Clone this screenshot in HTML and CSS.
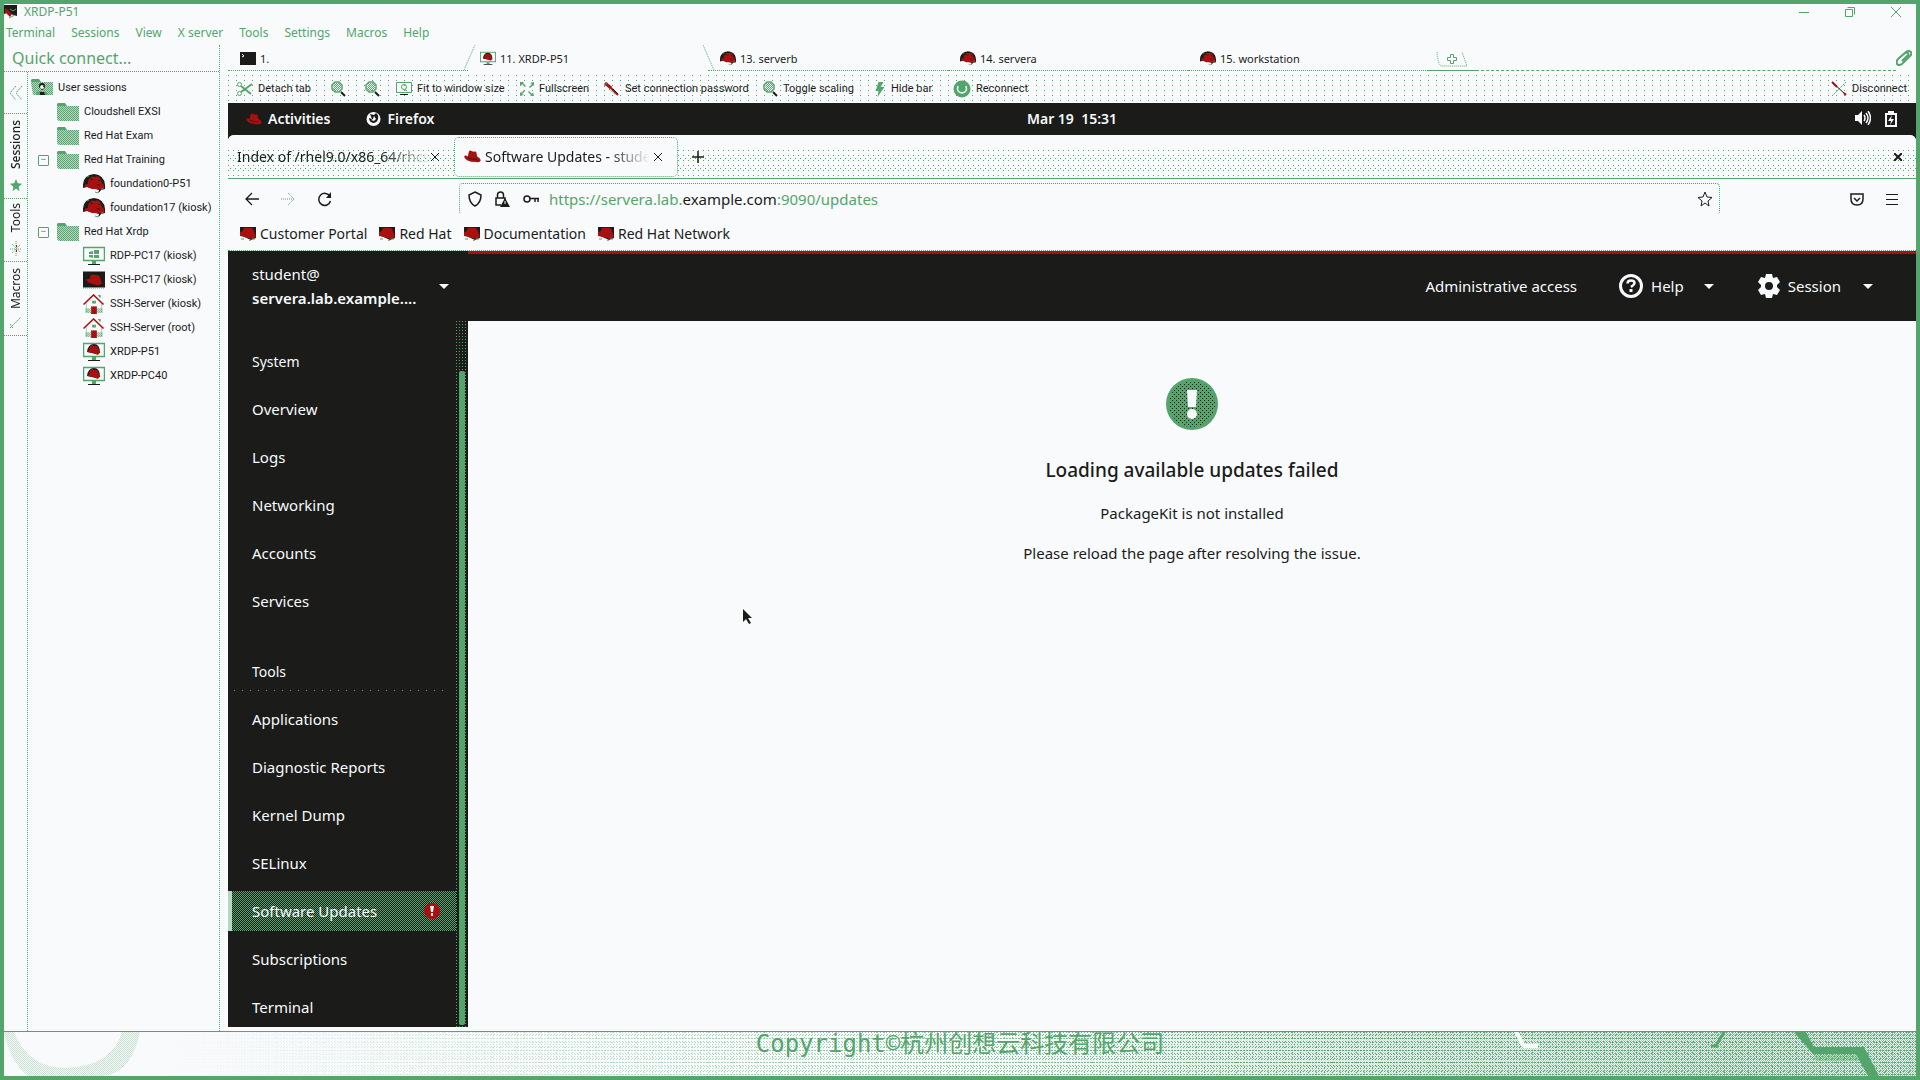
FILE: index.html
```
<!DOCTYPE html>
<html lang="en">
<head>
<meta charset="utf-8">
<title>XRDP-P51</title>
<link rel="stylesheet" href="styles.css">
</head>
<body>
<svg class="sprite" aria-hidden="true">
  <defs>
    <pattern id="weave" width="2" height="2" patternUnits="userSpaceOnUse"><path class="g" d="M0 0h1v1H0zM1 1h1v1H1z"/></pattern>
    <pattern id="speck" width="4" height="4" patternUnits="userSpaceOnUse"><path class="g" d="M0 0h4v4H0z"/><path class="k" d="M0 0h1v1H0zM2 2h1v1H2z"/></pattern>
  </defs>
  <symbol id="fedora" viewBox="0 0 18 14"><path class="r" d="M4 7 5 2Q6 0 8 1l2 1q2-1 3 0l1 5q3 1 4 4-1 3-5 2Q7 13 3 11 0 9 0 7q1-2 4 0z"/><path class="ks" d="M4 8q4 3 10 2"/></symbol>
  <symbol id="hatball" viewBox="0 0 22 20"><path class="k" d="M0 14Q-1 1 11 0q12 1 11 15l-4 1q-1 2-3 3l1-3-12-3z"/><path class="r" d="M1 12q1-2 4-2 0-6 3-7 2-1 4 0 3-2 5 1l2 5q3 2 2 5-2 2-6 1l-6 0-5-2-3-1z"/><path class="gs" d="M4 3l2-1M12 18l3 1M18 15h3"/><path class="ks" d="M7 4l3 2M15 6l2 1M14 11l3 0"/></symbol>
  <symbol id="hatbox" viewBox="0 0 16 14"><path class="k" d="M0 0h16v11l-5 2L0 8z"/><path class="r" d="M0 9V5l3-1q0-4 5-3 3-1 5 1l2 5 1 3-4 2-7-2z"/><path class="gs" d="M1 12h3M12 12h3M9 13l2 1"/></symbol>
  <symbol id="folder" viewBox="0 0 22 18"><path class="tint" d="M0 3h22v15H2l-2-2z"/><path d="M0 3h22v15H2l-2-2z" fill="url(#weave)"/><path class="g" d="M0 1l1-1h7l2 3H0z"/></symbol>
  <symbol id="userfolder" viewBox="0 0 22 18"><path class="tint" d="M0 3h22v13H2z"/><path d="M0 3h22v13H2z" fill="url(#weave)"/><path class="g" d="M0 1l1-1h7l2 3H0z"/><circle cx="11" cy="7" r="3" class="k"/><circle cx="11" cy="8" r="2" class="w"/><path class="r" d="M9 6h1v1H9zM12 7h1v1h-1zM10 10h2v1h-2z"/><path class="g" d="M5 16q1-4 4-4l2 2 1-2q4 1 5 4z"/><path class="k" d="M9 13h4l1 3H9z"/></symbol>
  <symbol id="monitor" viewBox="0 0 22 20"><path class="gs" d="M.5 1.500h21v13H.5z" stroke-width="1.500"/><path class="g" d="M9 15h4v3H9z"/><path class="k" d="M5 18h12v1H5z"/></symbol>
  <symbol id="rdp" viewBox="0 0 22 20"><use href="#monitor"/><path class="g" d="M6 6l4-1v3H6zM11 4h5v4h-5zM6 9h4v3l-4-1zM11 9h5v3h-5z"/></symbol>
  <symbol id="xrdp" viewBox="0 0 22 20"><use href="#monitor"/><path class="k" d="M4 10q1-8 7-8 6 0 6 9l-4 1z"/><path class="r" d="M5 10l2-5q2-3 4-1 3-1 4 2l2 4-2 3-5-2z"/></symbol>
  <symbol id="sshhat" viewBox="0 0 22 17"><path class="k" d="M0 0h22v16H0z"/><path class="r" d="M3 8l4-1 1-4 8 1 2 5 1 3-4 2-7-2q-3 0-5-4z"/><path class="gs" d="M0 16.500h22" stroke-dasharray="1 1"/></symbol>
  <symbol id="house" viewBox="0 0 22 21"><path class="gs" d="M3 10v10M19 10v10" stroke-dasharray="1 1"/><path d="M2 15h6v5H2zM14 15h6v5h-6z" fill="url(#weave)"/><path class="rs" d="M0 11 10.500 1 21 11" stroke-width="1.600"/><path class="g" d="M9 7h4v3H9zM15 1h3v3h-1z"/><path class="r" d="M8 13h6v8H8z"/></symbol>
  <symbol id="magnify" viewBox="0 0 16 16"><path class="gs" d="M5 1h4l3 3v4l-3 3H5L2 8V4z" stroke-width="1.500"/><path d="M4 2h5l2 2v4l-2 2H5L3 8z" fill="url(#weave)"/><path class="ks" d="M11 11l4 4" stroke-width="2"/></symbol>
  <symbol id="scissors" viewBox="0 0 16 14"><circle cx="2.500" cy="2.500" r="2" class="gs"/><circle cx="2.500" cy="11.500" r="2" class="gs"/><path class="gs" d="M4 4l10 8M4 10l11-8" stroke-width="2"/></symbol>
  <symbol id="fit" viewBox="0 0 16 14"><path class="gs" d="M.5.5h15v10H.5z"/><circle cx="8" cy="5" r="2.500" class="gs"/><path class="k" d="M9 7l2 2h-1zM4 12h8v1H4z"/></symbol>
  <symbol id="full" viewBox="0 0 14 14"><path class="g" d="M0 0h4L3 1l3 3-1 1-3-3-1 2H0zM14 0v4l-1-1-3 3-1-1 3-3-2-1zM0 14v-4l1 1 3-3 1 1-3 3 2 1zM14 14h-4l1-1-3-3 1-1 3 3 1-2z"/></symbol>
  <symbol id="wrench" viewBox="0 0 16 14"><path class="rs" d="M1 1l6 5" stroke-width="3"/><path class="rs" d="M6 5l8 8" stroke-width="2"/><path class="gs" d="M0 5l4-5M5 7l7 6" stroke-dasharray="2 1"/><path class="ks" d="M9 7l5 5"/></symbol>
  <symbol id="bolt" viewBox="0 0 9 15"><path class="g" d="M3 0h5L5 5h4L2 15l1-6H0z"/></symbol>
  <symbol id="power" viewBox="0 0 18 18"><circle cx="9" cy="9" r="8.500" class="g"/><path class="ws" d="M5 6q-2 6 4 7 6-1 4-7" stroke-width="1.500"/></symbol>
  <symbol id="unplug" viewBox="0 0 16 16"><path class="gs" d="M1 15 15 1" stroke-dasharray="2 1"/><path class="ks" d="M1 1l14 13"/><path class="rs" d="M1 1l5 5M13 12l2 2" stroke-width="2"/></symbol>
  <symbol id="terminal" viewBox="0 0 16 13"><path class="k" d="M0 0h16v13H0z"/><path class="ws" d="M2 2l2 2-2 1"/></symbol>
  <symbol id="star" viewBox="0 0 16 16"><path d="M8 1l2 5 5 .5-4 3.500 1 5-4-3-4 3 1-5L1 6.500 6 6z"/></symbol>
  <symbol id="gear" viewBox="0 0 22 24"><path class="w" fill-rule="evenodd" d="M8 0h6l1 4 4-1 3 5-3 3v2l3 3-3 5-4-1-1 4H8l-1-4-4 1-3-5 3-3v-2L0 8l3-5 4 1zM11 8a4 4 0 100 8 4 4 0 000-8z"/></symbol>
</svg>

<div class="window">
  <header class="titlebar">
    <svg class="app-icon" viewBox="0 0 13 14"><path class="k" d="M0 0h13v11L3 8 0 9z"/><path class="r" d="M1 3l3 2 4 4-2 3-5-5z"/><path class="gs" d="M6 4l3 2 3-2M5 13l6-3"/></svg>
    <span class="title">XRDP-P51</span>
    <button class="win" aria-label="Minimize"><svg width="10" height="10"><path class="gs" d="M0 5.500h10"/></svg></button>
    <button class="win" aria-label="Restore"><svg width="10" height="10"><path class="gs" d="M.5 2.500h7v7h-7zM2.500.5h7v7"/></svg></button>
    <button class="win" aria-label="Close"><svg width="10" height="10"><path class="gs" d="M0 0l10 10M10 0 0 10"/></svg></button>
  </header>
  <nav class="menubar">
    <button>Terminal</button><button>Sessions</button><button>View</button><button>X server</button><button>Tools</button><button>Settings</button><button>Macros</button><button>Help</button>
  </nav>

  <div class="workspace">
    <aside class="left">
      <input class="quick" type="text" placeholder="Quick connect..." aria-label="Quick connect">
      <div class="left-body">
        <div class="strip">
          <button class="strip-item fold" aria-label="Collapse"><svg width="14" height="14"><path class="gs" d="M7 0 1 7l6 7M13 0 7 7l6 7" stroke-dasharray="2 1"/></svg></button>
          <button class="strip-item sess"><span class="up">Sessions</span><svg class="g" width="14" height="14"><use href="#star"/></svg></button>
          <button class="strip-item tool"><span class="up">Tools</span><svg width="12" height="16"><path class="gs" d="M6 0v16M2 3l8 8M10 4l-8 8M0 8h12" stroke-dasharray="1 1"/><path class="r" d="M6 4h1v2H6zM6 9h1v2H6z"/></svg></button>
          <button class="strip-item macro"><span class="up">Macros</span><svg width="12" height="12"><path class="gs" d="M0 11 11 0M0 7l3 4" stroke-dasharray="2 1"/></svg></button>
        </div>
        <ul class="tree">
          <li class="l0"><svg class="ti"><use href="#userfolder"/></svg>User sessions</li>
          <li class="l1"><svg class="ti"><use href="#folder"/></svg>Cloudshell EXSI</li>
          <li class="l1"><svg class="ti"><use href="#folder"/></svg>Red Hat Exam</li>
          <li class="l1 open"><svg class="ti"><use href="#folder"/></svg>Red Hat Training</li>
          <li class="l2"><svg class="ti"><use href="#hatball"/></svg>foundation0-P51</li>
          <li class="l2"><svg class="ti"><use href="#hatball"/></svg>foundation17 (kiosk)</li>
          <li class="l1 open"><svg class="ti"><use href="#folder"/></svg>Red Hat Xrdp</li>
          <li class="l2"><svg class="ti"><use href="#rdp"/></svg>RDP-PC17 (kiosk)</li>
          <li class="l2"><svg class="ti"><use href="#sshhat"/></svg>SSH-PC17 (kiosk)</li>
          <li class="l2"><svg class="ti"><use href="#house"/></svg>SSH-Server (kiosk)</li>
          <li class="l2"><svg class="ti"><use href="#house"/></svg>SSH-Server (root)</li>
          <li class="l2"><svg class="ti"><use href="#xrdp"/></svg>XRDP-P51</li>
          <li class="l2"><svg class="ti"><use href="#xrdp"/></svg>XRDP-PC40</li>
        </ul>
      </div>
    </aside>

    <main class="main">
      <div class="tabs">
        <button class="tab"><svg width="16" height="13"><use href="#terminal"/></svg>1.</button>
        <button class="tab current"><svg width="16" height="15"><use href="#xrdp"/></svg>11. XRDP-P51<svg class="slant start" width="12" height="26"><path class="gs" d="M0 25 11 0" stroke-dasharray="1 1"/></svg><svg class="slant end" width="12" height="26"><path class="gs" d="M0 0 11 25" stroke-dasharray="1 1"/></svg></button>
        <button class="tab"><svg width="16" height="15"><use href="#hatball"/></svg>13. serverb</button>
        <button class="tab"><svg width="16" height="15"><use href="#hatball"/></svg>14. servera</button>
        <button class="tab"><svg width="16" height="15"><use href="#hatball"/></svg>15. workstation</button>
        <button class="tab-new" aria-label="New tab"><svg width="32" height="15"><path class="gs" d="M1 0q1 14 5 14h25L26 0" stroke-dasharray="1 1"/><path class="gs" d="M14.500 2.500h3v3h3v3h-3v3h-3v-3h-3v-3h3z"/></svg></button>
        <span class="tabs-rest"></span>
        <button class="clip" aria-label="Attach"><svg width="16" height="16"><path class="gs" d="M3 8l7-6q3-2 5 0 1 2-1 4l-8 8q-3 2-5 0-1-3 1-5l7-6q2-1 3 0 1 2-1 3l-5 5" stroke-width="2"/></svg></button>
      </div>

      <div class="tools">
        <button class="t1"><svg width="16" height="14"><use href="#scissors"/></svg>Detach tab</button>
        <button class="t2" aria-label="Zoom in"><svg width="16" height="16"><use href="#magnify"/></svg></button>
        <button class="t3" aria-label="Zoom out"><svg width="16" height="16"><use href="#magnify"/></svg></button>
        <button class="t4"><svg width="16" height="14"><use href="#fit"/></svg>Fit to window size</button>
        <button class="t5"><svg width="14" height="14"><use href="#full"/></svg>Fullscreen</button>
        <button class="t6"><svg width="16" height="14"><use href="#wrench"/></svg>Set connection password</button>
        <button class="t7"><svg width="16" height="16"><use href="#magnify"/></svg>Toggle scaling</button>
        <button class="t8"><svg width="12" height="15"><use href="#bolt"/></svg>Hide bar</button>
        <button class="t9"><svg width="18" height="18"><use href="#power"/></svg>Reconnect</button>
        <button class="t10"><svg width="16" height="16"><use href="#unplug"/></svg>Disconnect</button>
      </div>

      <div class="gnome">
        <div class="gnome-left">
          <button class="activities"><svg width="16" height="12"><use href="#fedora"/></svg>Activities</button>
          <button><svg width="15" height="14" viewBox="0 0 15 14"><circle cx="7.500" cy="7" r="7" class="w"/><path class="k" d="M4 2l4 1 2-2q3 2 2 6-1 4-5 4-4-1-4-5l3 1z"/><path class="w" d="M8 4l2 3-2 2-3-1 2-1z"/></svg>Firefox</button>
        </div>
        <time>Mar 19&nbsp; 15:31</time>
        <div class="gnome-right">
          <svg width="16" height="14"><path class="w" d="M0 4h3l4-4v14l-4-4H0z"/><path class="ws" d="M9 4q2 3 0 6M11 2q4 5 0 10M13 0q5 7 0 14" stroke-width="1.500"/></svg>
          <svg width="12" height="16"><path class="w" fill-rule="evenodd" d="M0 2h3V0h6v2h3v14H0zM2 4v10h8V4z"/><path class="w" d="M7 4 3 10h3l-1 4 4-6H6z"/></svg>
        </div>
      </div>

      <div class="browser-tabs">
        <button class="btab first"><span class="fade">Index of /rhel9.0/x86_64/rhcs</span><svg width="8" height="8"><path class="ks" d="M0 0l8 8M8 0 0 8"/></svg></button>
        <button class="btab on"><svg width="17" height="13"><use href="#fedora"/></svg><span class="fade">Software Updates - stude</span><svg width="8" height="8"><path class="ks" d="M0 0l8 8M8 0 0 8"/></svg></button>
        <button class="plus" aria-label="Open a new tab"><svg width="12" height="12"><path class="ks" d="M6 0v12M0 6h12" stroke-width="1.500"/></svg></button>
        <button class="bclose" aria-label="Close window"><svg width="8" height="8"><path class="ks" d="M0 0l8 8M8 0 0 8" stroke-width="2"/></svg></button>
      </div>

      <div class="nav">
        <div class="nav-btns">
          <button aria-label="Back"><svg width="14" height="14"><path class="ks" d="M7 1 1 7l6 6M1 7h13" stroke-width="1.300"/></svg></button>
          <button aria-label="Forward"><svg width="14" height="14"><path class="gs" d="M7 1l6 6-6 6M0 7h13" stroke-dasharray="1 1"/></svg></button>
          <button aria-label="Reload"><svg width="15" height="15"><path class="ks" d="M13 4.500A6 6 0 1 0 13.500 9" stroke-width="1.500"/><path class="k" d="M14 0v6H9z"/></svg></button>
        </div>
        <div class="url">
          <svg width="14" height="16"><path class="ks" d="M7 1l6 3q0 8-6 11-6-3-6-11z" stroke-width="1.500"/></svg>
          <svg width="15" height="16"><path class="ks" d="M2.500 7V4q0-3 3-3t3 3v3M6 14H1V7h9v2" stroke-width="1.500"/><path class="k" d="M10 7l5 9H5z"/><path class="w" d="M9.500 10h1v3h-1z"/></svg>
          <svg width="16" height="10"><circle cx="4" cy="5" r="3" class="ks" stroke-width="1.500"/><path class="ks" d="M7 4.500h9M12 5v3M15 5v3" stroke-width="1.500"/></svg>
          <span class="address" role="textbox" aria-label="Address">https://servera.lab.<b>example.com</b>:9090/updates</span>
          <button aria-label="Bookmark"><svg width="16" height="16" class="hollow"><use href="#star"/></svg></button>
        </div>
        <div class="nav-end">
          <button aria-label="Pocket"><svg width="14" height="13"><path class="ks" d="M1 1h12v5q0 6-6 6T1 6zM4 5l3 3 3-3" stroke-width="1.500"/></svg></button>
          <button aria-label="Menu"><svg width="12" height="11"><path class="k" d="M0 0h12v1H0zM0 5h12v1H0zM0 10h12v1H0z"/></svg></button>
        </div>
      </div>

      <div class="bookmarks">
        <a href="#"><svg width="16" height="14"><use href="#hatbox"/></svg>Customer Portal</a>
        <a href="#"><svg width="16" height="14"><use href="#hatbox"/></svg>Red Hat</a>
        <a href="#"><svg width="16" height="14"><use href="#hatbox"/></svg>Documentation</a>
        <a href="#"><svg width="16" height="14"><use href="#hatbox"/></svg>Red Hat Network</a>
      </div>

      <div class="masthead">
        <button class="host"><span class="who"><span>student@</span><b>servera.lab.example....</b></span><i class="caret"></i></button>
        <div class="mast-right">
          <button class="admin">Administrative access</button>
          <button class="help"><svg width="24" height="24"><circle cx="12" cy="12" r="10.500" class="ws" stroke-width="3"/><path class="ws" d="M8.500 9.500q0-3 3.500-3t3.500 2.500q0 1.500-3.500 4" stroke-width="2.500"/><path class="w" d="M10.500 15h3v3h-3z"/></svg>Help<i class="caret"></i></button>
          <button class="session"><svg width="22" height="24"><use href="#gear"/></svg>Session<i class="caret"></i></button>
        </div>
      </div>

      <div class="page">
        <nav class="sidebar">
          <div class="side-scroll">
            <h2>System</h2>
            <a href="#">Overview</a><a href="#">Logs</a><a href="#">Networking</a><a href="#">Accounts</a><a href="#">Services</a>
            <h2 class="ruled">Tools</h2>
            <a href="#">Applications</a><a href="#">Diagnostic Reports</a><a href="#">Kernel Dump</a><a href="#">SELinux</a>
            <a href="#" class="active">Software Updates<svg width="16" height="16"><circle cx="8" cy="8" r="8" class="r"/><path class="w" d="M6 3h4l-1 6H7zM7 10h2v3H7z"/></svg></a>
            <a href="#">Subscriptions</a><a href="#">Terminal</a>
          </div>
          <div class="bar"><div class="thumb"></div></div>
        </nav>
        <section class="content">
          <svg class="alert" width="52" height="52" viewBox="0 0 52 52"><circle cx="26" cy="26" r="26" class="g"/><circle cx="26" cy="26" r="23" fill="url(#speck)"/><path class="w" d="M21 12h10l-1 17h-8z"/><circle cx="26" cy="36" r="5" class="w"/></svg>
          <h1>Loading available updates failed</h1>
          <p>PackageKit is not installed</p>
          <p>Please reload the page after resolving the issue.</p>
        </section>
      </div>
    </main>
  </div>

  <footer class="footer">
    <svg class="arc" width="140" height="44"><path d="M0 0h10q14 36 52 36Q108 34 118 0h18q-8 40-36 44H24Q6 30 0 0z"/></svg>
    <p>Copyright©杭州创想云科技有限公司</p>
    <svg class="hex" width="420" height="44"><path class="ws" d="M56 0l8 14h14" stroke-width="4"/><path class="gs" d="M264 0l-8 14h-5" stroke-width="3"/><path class="g" d="M334 0h12l8 15h50l15 29h-11l-12-22h-43z"/><path class="tint" d="M354 22h42l4 7h-44z"/></svg>
  </footer>
  <svg class="pointer" width="11" height="17"><path class="k" d="M0 0v13l3-3 3 5 2-1-3-5h4z"/></svg>
</div>
</body>
</html>
```
FILE: styles.css
```
:root {
  --paper: #f8fafc;
  --green: #54a56b;
  --ink: #1b1c1a;
  --red: #ab1010;
  --dot: conic-gradient(from 270deg at 1px 1px, var(--green) 90deg, transparent 0);
  --check: repeating-conic-gradient(var(--green) 0 25%, transparent 0 50%);
}
* { box-sizing: border-box; }
body { margin: 0; background: var(--paper); color: var(--ink); font: 16px/24px "Noto Sans", sans-serif; }
button, input { font: inherit; color: inherit; border: 0; padding: 0; margin: 0; background: none; }
button { display: flex; align-items: center; white-space: nowrap; }
a { color: inherit; text-decoration: none; }
h1, h2, p, ul { margin: 0; padding: 0; font-weight: 400; }
svg { flex: none; display: block; }
.sprite { position: absolute; width: 0; height: 0; }
.g { fill: var(--green); } .k { fill: var(--ink); } .r { fill: var(--red); } .w { fill: var(--paper); }
.tint { fill: var(--green); fill-opacity: .4; }
.gs, .ks, .rs, .ws { fill: none; }
.gs { stroke: var(--green); } .ks { stroke: var(--ink); } .rs { stroke: var(--red); } .ws { stroke: var(--paper); }
.hollow { fill: none; stroke: var(--ink); }

.window { position: relative; height: 100vh; border: 4px solid var(--green); display: flex; flex-direction: column; overflow: hidden; }

.titlebar { display: flex; align-items: center; height: 16px; flex: none; color: var(--green); font-size: 12px; line-height: 16px; padding-right: 15px; gap: 36px; }
.app-icon { width: 13px; height: 14px; margin-right: -29px; }
.title { flex: 1; }
.win { height: 12px; }
.menubar { display: flex; gap: 16px; height: 25px; flex: none; padding-left: 2px; color: var(--green); font-size: 12px; line-height: 16px; }

.workspace { flex: 1; min-height: 0; display: flex; gap: 8px; }
.left { width: 216px; flex: none; display: flex; flex-direction: column; border-right: 1px dotted var(--green); }
.quick { height: 27px; flex: none; padding: 0 8px; width: 100%; font-size: 16px; border-bottom: 1px dotted var(--green); }
.quick::placeholder { color: var(--green); opacity: 1; }
.left-body { flex: 1; display: flex; }
.strip { width: 24px; flex: none; border-right: 1px dotted var(--green); font-size: 12px; line-height: 16px; }
.strip-item { flex-direction: column; justify-content: center; gap: 8px; width: 23px; border-bottom: 1px dotted var(--green); }
.up { writing-mode: vertical-rl; transform: rotate(180deg); }
.fold { height: 42px; } .sess { height: 85px; } .tool { height: 63px; } .macro { height: 74px; }
.sess { font-weight: 500; }
.tree { list-style: none; padding-top: 4px; font: 11px/24px Roboto, sans-serif; white-space: nowrap; }
.tree li { display: flex; align-items: center; gap: 5px; height: 24px; position: relative; }
.ti { width: 22px; height: 20px; }
.l0 { padding-left: 3px; } .l1 { padding-left: 29px; } .l2 { padding-left: 55px; }
.open::before { content: "−"; position: absolute; left: 10px; width: 9px; height: 9px; border: 1px solid var(--green); color: var(--green); line-height: 7px; text-align: center; border-radius: 1px; }

.main { flex: 1; min-width: 0; display: flex; flex-direction: column; }
.tabs { display: flex; height: 26px; flex: none; font-size: 11px; }
.tab { width: 240px; flex: none; gap: 4px; padding: 2px 0 0 12px; position: relative; border-bottom: 1px dotted var(--green); }
.tab.current { border-bottom-color: transparent; }
.slant { position: absolute; top: 0; }
.start { left: -4px; } .end { right: -7px; }
.tab-new { width: 48px; padding-top: 3px; justify-content: center; border-bottom: 1px solid var(--green); }
.tabs-rest { flex: 1; border-bottom: 1px dashed var(--green); }
.clip { width: 20px; }

.tools { display: flex; height: 32px; flex: none; padding: 4px 9px 0; font: 11px/24px Roboto, sans-serif; background: var(--dot) 0 4px / 8px 5px; }
.tools button { gap: 5px; flex: none; height: 28px; }
.t1 { width: 93px; } .t2 { width: 34px; } .t3 { width: 32px; } .t4 { width: 124px; } .t5 { width: 84px; }
.t6 { width: 158px; } .t7 { width: 112px; } .t8 { width: 79px; }
.tools .t10 { margin-left: auto; }

.gnome { display: grid; grid-template-columns: 1fr auto 1fr; align-items: center; height: 32px; flex: none; background: var(--ink); color: var(--paper); font-size: 14px; font-weight: 600; }
.gnome-left { display: flex; gap: 36px; padding-left: 18px; }
.gnome-left button { gap: 6px; }
.gnome-right { display: flex; justify-content: flex-end; gap: 14px; padding-right: 19px; }

.browser-tabs { display: flex; align-items: center; height: 44px; flex: none; padding-left: 9px; border-bottom: 1px solid var(--green); font-size: 14px; background: linear-gradient(var(--paper) 14px, transparent 0), var(--dot) 0 0 / 5px 5px, var(--dot) 2px 3px / 5px 10px, var(--paper); border-radius: 6px 6px 0 0; box-shadow: 0 -8px 0 var(--ink); }
.btab { height: 40px; }
.first { width: 217px; }
.fade { flex: 1; min-width: 0; text-align: left; mask-image: linear-gradient(90deg, #000 75%, transparent); }
.first .fade { flex: none; width: 194px; }
.on { width: 224px; padding: 0 15px 0 9px; gap: 4px; background: var(--paper); border: 1px dotted var(--green); border-radius: 5px; }
.plus { margin-left: 14px; }
.bclose { margin-left: auto; padding-right: 14px; }

.nav { display: flex; align-items: center; height: 40px; flex: none; }
.nav-btns { display: flex; gap: 22px; width: 231px; flex: none; padding-left: 17px; }
.url { flex: 1; display: flex; align-items: center; height: 32px; gap: 13px; padding: 0 6px 0 8px; border: 1px dotted var(--green); border-bottom-color: transparent; border-radius: 4px; }
.address { flex: 1; color: var(--green); font-size: 15px; margin-left: -3px; }
.address b { color: var(--ink); font-weight: 400; }
.nav-end { display: flex; width: 196px; flex: none; justify-content: flex-end; gap: 22px; padding-right: 18px; }

.bookmarks { display: flex; align-items: center; gap: 12px; height: 32px; flex: none; padding: 0 0 1px 12px; border-bottom: 1px dotted var(--green); font-size: 14px; }
.bookmarks a { display: flex; align-items: center; gap: 4px; }

.masthead { display: flex; height: 70px; flex: none; background: var(--ink); color: var(--paper); font-size: 15px; }
.host { width: 240px; flex: none; justify-content: space-between; padding: 0 19px 0 24px; text-align: left; }
.who { display: flex; flex-direction: column; }
.who b { font-weight: 600; }
.mast-right { flex: 1; display: flex; justify-content: flex-end; border-top: 3px solid var(--red); padding: 0 43px 3px 0; }
.caret { border: 5px solid transparent; border-top-color: var(--paper); border-bottom: 0; }
.admin { margin-right: 42px; }
.help, .session { gap: 8px; }
.help { margin-right: 44px; }
.help .caret { margin-left: 12px; }
.session .caret { margin-left: 14px; }

.page { flex: 1; min-height: 0; display: flex; margin-bottom: 4px; }
.sidebar { width: 240px; flex: none; display: flex; background: var(--ink); color: var(--paper); font-size: 15px; }
.side-scroll { flex: 1; overflow: hidden; padding-top: 29px; }
.side-scroll h2 { height: 31px; margin: 0 6px 8px; padding-left: 18px; font-size: 14px; line-height: 24px; }
.side-scroll .ruled { margin-top: 39px; background: var(--dot) 0 30px / 8px 40px; }
.side-scroll a { display: flex; align-items: center; justify-content: space-between; height: 40px; margin-bottom: 8px; padding: 0 16px 0 24px; }
.side-scroll .active { border-left: 4px solid #b4d9c0; padding-left: 20px; background: var(--check) 0 0 / 2px 2px; }
.bar { width: 12px; padding: 50px 3px 2px; background: var(--dot) 0 0 / 3px 3px; }
.thumb { height: 100%; background: var(--green); border-radius: 2px; }
.content { flex: 1; display: flex; flex-direction: column; align-items: center; padding-top: 57px; font-size: 15px; }
.content h1 { margin-top: 25px; font-size: 19px; line-height: 30px; font-weight: 500; }
.content p { margin-top: 16px; }

.footer { height: 45px; flex: none; border-top: 1px solid var(--green); position: relative; color: var(--green); text-align: center;
  background: linear-gradient(90deg, var(--paper) 8%, transparent 70%), var(--dot) 0 0 / 3px 3px, var(--dot) 1px 2px / 3px 4px, var(--dot) 0 0 / 8px 5px; }
.footer::before { content: ""; position: absolute; inset: 0; background: var(--check) 0 0 / 2px 2px; opacity: .6; mask-image: linear-gradient(90deg, transparent 50%, #000 90%); }
.footer p { position: relative; font: 24px/24px "DejaVu Sans Mono", "Noto Sans CJK SC", monospace; }
.arc { position: absolute; left: 0; top: 0; fill: url(#weave); opacity: .3; }
.hex { position: absolute; right: 36px; top: 0; }
.pointer { position: absolute; left: 739px; top: 605px; }
```
